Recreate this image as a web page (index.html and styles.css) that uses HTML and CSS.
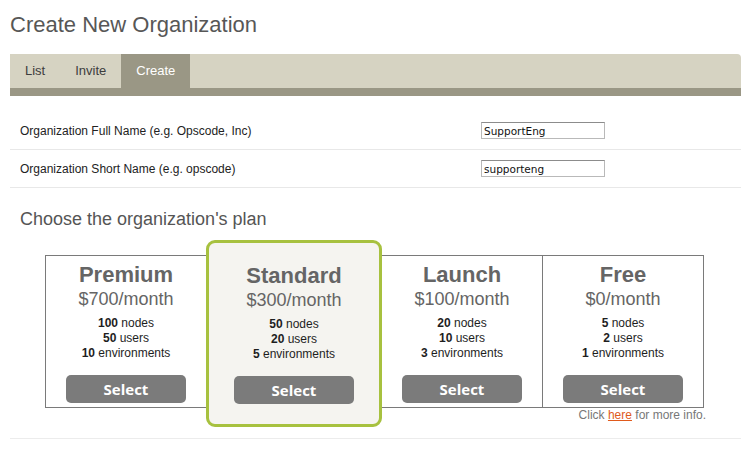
FILE: index.html
```html
<!DOCTYPE html>
<html lang="en">
<head>
<meta charset="utf-8">
<title>Create New Organization</title>
<link rel="stylesheet" href="styles.css">
</head>
<body>
<div class="page">
  <h1 class="title">Create New Organization</h1>
  <nav class="tabs">
    <a class="tab">List</a>
    <a class="tab">Invite</a>
    <a class="tab active">Create</a>
  </nav>
  <form class="org-form">
    <div class="row">
      <label class="row-label">Organization Full Name (e.g. Opscode, Inc)</label>
      <input class="row-input" type="text" value="SupportEng">
    </div>
    <div class="row">
      <label class="row-label">Organization Short Name (e.g. opscode)</label>
      <input class="row-input" type="text" value="supporteng">
    </div>
  </form>
  <h2 class="plan-heading">Choose the organization's plan</h2>
  <div class="plans">
    <div class="plan">
      <div class="plan-name">Premium</div>
      <div class="plan-price">$700/month</div>
      <ul class="plan-features">
        <li><b>100</b> nodes</li>
        <li><b>50</b> users</li>
        <li><b>10</b> environments</li>
      </ul>
      <button class="select-btn" type="button">Select</button>
    </div>
    <div class="plan featured">
      <div class="plan-name">Standard</div>
      <div class="plan-price">$300/month</div>
      <ul class="plan-features">
        <li><b>50</b> nodes</li>
        <li><b>20</b> users</li>
        <li><b>5</b> environments</li>
      </ul>
      <button class="select-btn" type="button">Select</button>
    </div>
    <div class="plan divided">
      <div class="plan-name">Launch</div>
      <div class="plan-price">$100/month</div>
      <ul class="plan-features">
        <li><b>20</b> nodes</li>
        <li><b>10</b> users</li>
        <li><b>3</b> environments</li>
      </ul>
      <button class="select-btn" type="button">Select</button>
    </div>
    <div class="plan">
      <div class="plan-name">Free</div>
      <div class="plan-price">$0/month</div>
      <ul class="plan-features">
        <li><b>5</b> nodes</li>
        <li><b>2</b> users</li>
        <li><b>1</b> environments</li>
      </ul>
      <button class="select-btn" type="button">Select</button>
    </div>
  </div>
  <p class="more-info">Click <a class="more-link">here</a> for more info.</p>
  <div class="end-rule"></div>
</div>
</body>
</html>
```

FILE: styles.css
```css
html, body {
  margin: 0;
  padding: 0;
  background: #fff;
}

body {
  font-family: "Liberation Sans", Arial, Helvetica, sans-serif;
  color: #222;
}

.page {
  width: 731px;
  margin-left: 10px;
}

.title {
  margin: 12px 0 16px;
  font-size: 22px;
  line-height: 26px;
  font-weight: normal;
  color: #575757;
}

.tabs {
  display: flex;
  height: 34px;
  background: #d6d3c2;
  border-bottom: 8px solid #9a9785;
  border-top-right-radius: 4px;
}

.tab {
  padding: 0 15px;
  font-size: 13px;
  line-height: 34px;
  color: #3d3d3d;
}

.tab.active {
  background: #9a9785;
  color: #fff;
}

.org-form {
  margin-top: 16px;
}

.row {
  display: grid;
  grid-template-columns: 461px 124px;
  align-items: center;
  height: 37px;
  padding-left: 10px;
  border-bottom: 1px solid #e8e8e8;
}

.row-label {
  font-size: 12px;
  color: #222;
}

.row-input {
  box-sizing: border-box;
  width: 124px;
  height: 17px;
  margin: 0;
  padding: 0 2px;
  border: 1px solid #b9b9b9;
  border-top-color: #8c8c8c;
  font-family: "DejaVu Sans", sans-serif;
  font-size: 10.5px;
  color: #111;
  background: #fff;
}

.plan-heading {
  margin: 20px 0 25px;
  padding-left: 10px;
  font-size: 18px;
  line-height: 22px;
  font-weight: normal;
  color: #555;
}

.plans {
  display: flex;
  box-sizing: border-box;
  width: 659px;
  margin-left: 35px;
  border: 1px solid #7a7a7a;
}

.plan {
  box-sizing: border-box;
  width: 160px;
  padding: 6px 0 4px;
  text-align: center;
}

.plan.divided {
  width: 161px;
  border-right: 1px solid #7a7a7a;
}

.plan.featured {
  width: 176px;
  margin: -16px 0 -20px;
  padding: 20px 0 20px;
  border: 3px solid #a7c13f;
  border-radius: 9px;
  background: #f5f4f0;
}

.plan-name {
  font-size: 22px;
  line-height: 26px;
  font-weight: bold;
  color: #656565;
}

.plan-price {
  font-size: 18px;
  line-height: 22px;
  color: #656565;
}

.plan-features {
  list-style: none;
  margin: 6px 0 0;
  padding: 0;
  font-size: 12px;
  line-height: 15px;
  color: #1e1e1e;
}

.select-btn {
  display: block;
  width: 120px;
  height: 28px;
  margin: 14px auto 0;
  padding: 0;
  border: none;
  border-radius: 5px;
  background: #7b7b7b;
  color: #fff;
  font-family: "Open Sans", "DejaVu Sans", sans-serif;
  font-weight: 700;
  font-size: 15px;
  line-height: 28px;
}

.more-info {
  width: 661px;
  margin: 0 0 0 35px;
  text-align: right;
  font-size: 12px;
  line-height: 14px;
  color: #777;
}

.more-link {
  color: #e05a1c;
  text-decoration: underline;
}

.end-rule {
  margin-top: 16px;
  border-top: 1px solid #ececec;
}
```
